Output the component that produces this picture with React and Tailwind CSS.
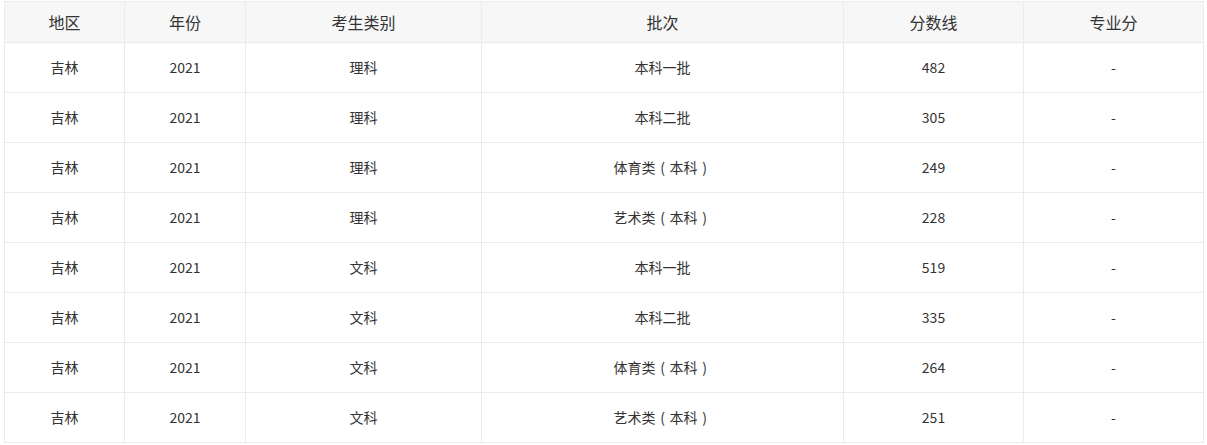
import React from "react";

const rows = [
  ["吉林", "2021", "理科", "本科一批", "482", "-"],
  ["吉林", "2021", "理科", "本科二批", "305", "-"],
  ["吉林", "2021", "理科", ["体育类", "本科"], "249", "-"],
  ["吉林", "2021", "理科", ["艺术类", "本科"], "228", "-"],
  ["吉林", "2021", "文科", "本科一批", "519", "-"],
  ["吉林", "2021", "文科", "本科二批", "335", "-"],
  ["吉林", "2021", "文科", ["体育类", "本科"], "264", "-"],
  ["吉林", "2021", "文科", ["艺术类", "本科"], "251", "-"],
];

const headers = ["地区", "年份", "考生类别", "批次", "分数线", "专业分"];
const widths = ["w-[120px]", "w-[121px]", "w-[236px]", "w-[362px]", "w-[180px]", "w-[180px]"];

// full-width parens drawn centred in their cell, like the source font does
const Cell = ({ value }) => {
  if (!Array.isArray(value)) return value;
  return (
    <>
      {value[0]}
      <span className="inline-block w-[14px] text-center">(</span>
      {value[1]}
      <span className="inline-block w-[14px] text-center">)</span>
    </>
  );
};

export default function App() {
  return (
    <div className="bg-white pl-[4px] pt-px w-[1207px] h-[445px] font-['Microsoft_YaHei','Noto_Sans_CJK_SC',sans-serif] text-[#333]">
      <table className="border-collapse table-fixed w-[1200px]">
        <colgroup>
          {widths.map((w, i) => (
            <col key={i} className={w} />
          ))}
        </colgroup>
        <thead>
          <tr className="bg-[#f7f7f7]">
            {headers.map((h) => (
              <th key={h} className="h-[41px] border border-[#ebebeb] text-center text-[16px] font-normal p-0">
                {h}
              </th>
            ))}
          </tr>
        </thead>
        <tbody>
          {rows.map((r, i) => (
            <tr key={i}>
              {r.map((c, j) => (
                <td key={j} className="h-[50px] border border-[#ebebeb] text-center text-[14px] p-0">
                  <Cell value={c} />
                </td>
              ))}
            </tr>
          ))}
        </tbody>
      </table>
    </div>
  );
}
